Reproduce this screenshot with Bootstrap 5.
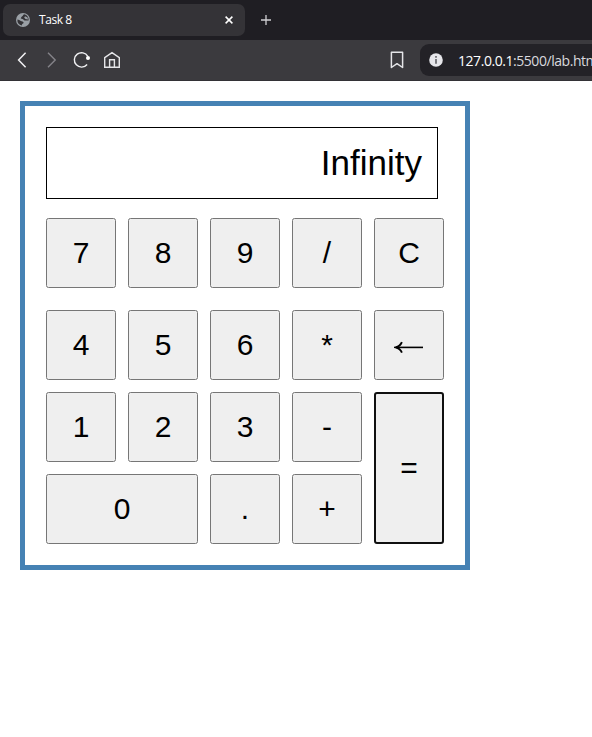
<!DOCTYPE html>
<html lang="en">
<head>
<meta charset="utf-8">
<meta name="viewport" content="width=device-width, initial-scale=1">
<title>Task 8</title>
<link href="https://cdn.jsdelivr.net/npm/bootstrap@5.3.0/dist/css/bootstrap.min.css" rel="stylesheet">
<style>
  body { font-family: "Liberation Sans", Arial, sans-serif; color: #000; }
  .browser { font-family: "Open Sans", "Noto Sans", sans-serif; color: #fff; }
  .tab-strip { height: 40px; background: #1f1e23; padding: 4px 3px; }
  .page-tab { width: 242px; height: 32px; border-radius: 7px; background: #343337; padding: 0 10px 0 13px; font-size: 12px; }
  .tab-title { margin-left: 9px; letter-spacing: -.45px; }
  .tab-plus { margin-left: 15px; }
  .toolbar { height: 41px; background: #3b3a3e; border-bottom: 1px solid #333236; padding-left: 12px; }
  .tool-icon { width: 20px; height: 20px; flex: none; margin-right: 10px; }
  .address { width: 172px; flex: none; height: 32px; border-radius: 9px 0 0 9px; background: #232227; margin-left: 13px; padding-left: 9px; font-size: 14px; color: #d9d9de; white-space: nowrap; overflow: hidden; }
  .address svg { flex: none; }
  .address-text { margin-left: 15px; letter-spacing: -.45px; }
  .calculator { width: 450px; height: 469px; margin: 20px; border: 5px solid #4682b4; padding: 21px; }
  .screen { width: 392px; height: 72px; border: 1px solid #000; padding: 0 15px; font-size: 35px; line-height: 70px; }
  .keys { width: 398px; margin-top: 19px; grid-template-columns: repeat(5, 70px); grid-template-rows: 80px 70px 70px 70px; gap: 12px; }
  .key { height: 70px; padding: 0; border: 1px solid #767676; border-radius: 2.5px; background: #efefef; color: #000; font-size: 30px; line-height: 1; }
  .key:hover { background: #e5e5e5; border-color: #4f4f4f; color: #000; }
  .key-wide { grid-column: span 2; }
  .key-tall { grid-column: 5; grid-row: 3 / span 2; height: 152px; border: 2px solid #101010; border-radius: 3px; }
</style>
</head>
<body class="bg-white overflow-hidden">
<header class="browser overflow-hidden">
  <div class="tab-strip d-flex align-items-center">
    <div class="page-tab d-flex align-items-center">
      <svg width="14" height="14" viewBox="0 0 14 14"><circle cx="7" cy="7" r="7" fill="#9aa0a6"/><path d="M8.3 1.3C6.6 2 7.2 3 6 3.4 4.9 3.8 5.4 4.8 4.6 5.2 5.6 6 7.6 5.8 8 7.2 9.2 7.8 10.6 7.2 12.6 7.6A5.7 5.7 0 0 0 8.3 1.3zM1.4 6.6A5.7 5.7 0 0 0 6 12.6C5.6 11.4 6.2 10.7 7.4 10.2 8.2 9.4 6.9 8.3 5.5 8.3 4.4 8.2 4.3 6.9 1.4 6.6z" fill="#343337"/><path d="M9 3.2 11.5 4.6 12 6.4 9.5 6 8.2 4.8z" fill="#9aa0a6"/></svg>
      <span class="tab-title">Task 8</span>
      <svg class="ms-auto me-0" width="12" height="12" viewBox="0 0 12 12"><path d="m2.6 2.6 6.8 6.8m0-6.8L2.6 9.4" stroke="#fff" stroke-width="1.5"/></svg>
    </div>
    <svg class="tab-plus" width="12" height="12" viewBox="0 0 12 12"><path d="M6 1v10M1 6h10" stroke="#d0d0d3" stroke-width="1.3"/></svg>
  </div>
  <div class="toolbar d-flex align-items-center">
    <svg class="tool-icon" viewBox="0 0 20 20" fill="none" stroke="#f1f1f3" stroke-width="1.5"><path d="m13.6 2.8-7 7.2 7 7.2"/></svg>
    <svg class="tool-icon" viewBox="0 0 20 20" fill="none" stroke="#858489" stroke-width="1.4"><path d="m6 2.8 7.2 7.2L6 17.2"/></svg>
    <svg class="tool-icon" viewBox="0 0 20 20" fill="none" stroke="#f1f1f3" stroke-width="1.4"><path d="M15.1 14.5A7.2 7.2 0 1 1 15.8 6.3"/><circle cx="16" cy="8" r="2" fill="#fff" stroke="none"/></svg>
    <svg class="tool-icon" viewBox="0 0 20 20" fill="none" stroke="#e5e5e8" stroke-width="1.4"><path d="m2.7 7.6 7.3-5 7.3 5v9.7H2.7zM7.6 17V9.8h4.8V17"/></svg>
    <svg class="tool-icon ms-auto me-0" viewBox="0 0 20 20" fill="none" stroke="#e5e5e8" stroke-width="1.5"><path d="M4.4 2.2h11.2v15.3L10 13.7l-5.6 3.8z" stroke-linejoin="round"/></svg>
    <div class="address d-flex align-items-center">
      <svg width="14" height="14" viewBox="0 0 14 14"><circle cx="7" cy="7" r="6.8" fill="#e6e6ea"/><path d="M7 3v1.8M7 6v4.7" stroke="#55545a" stroke-width="1.5"/></svg>
      <span class="address-text"><span class="text-white">127.0.0.1</span>:5500/lab.html</span>
    </div>
  </div>
</header>
<main class="calculator">
  <div class="screen text-end">Infinity</div>
  <div class="keys d-grid">
    <button class="btn key">7</button>
    <button class="btn key">8</button>
    <button class="btn key">9</button>
    <button class="btn key">/</button>
    <button class="btn key">C</button>
    <button class="btn key">4</button>
    <button class="btn key">5</button>
    <button class="btn key">6</button>
    <button class="btn key">*</button>
    <button class="btn key d-flex align-items-center justify-content-center" aria-label="Backspace"><svg width="30" height="16" viewBox="0 0 30 16"><path d="M2 10.4h27" stroke="#000" stroke-width="1.6"/><path d="M7.9 5.2C6.8 7.8 4.6 9.6 1.6 10.4 4.6 11.2 6.8 13 7.9 15.6" fill="none" stroke="#000" stroke-width="1.9"/></svg></button>
    <button class="btn key">1</button>
    <button class="btn key">2</button>
    <button class="btn key">3</button>
    <button class="btn key">-</button>
    <button class="btn key key-tall">=</button>
    <button class="btn key key-wide">0</button>
    <button class="btn key">.</button>
    <button class="btn key">+</button>
  </div>
</main>
<script src="https://cdn.jsdelivr.net/npm/bootstrap@5.3.0/dist/js/bootstrap.bundle.min.js"></script>
</body>
</html>
